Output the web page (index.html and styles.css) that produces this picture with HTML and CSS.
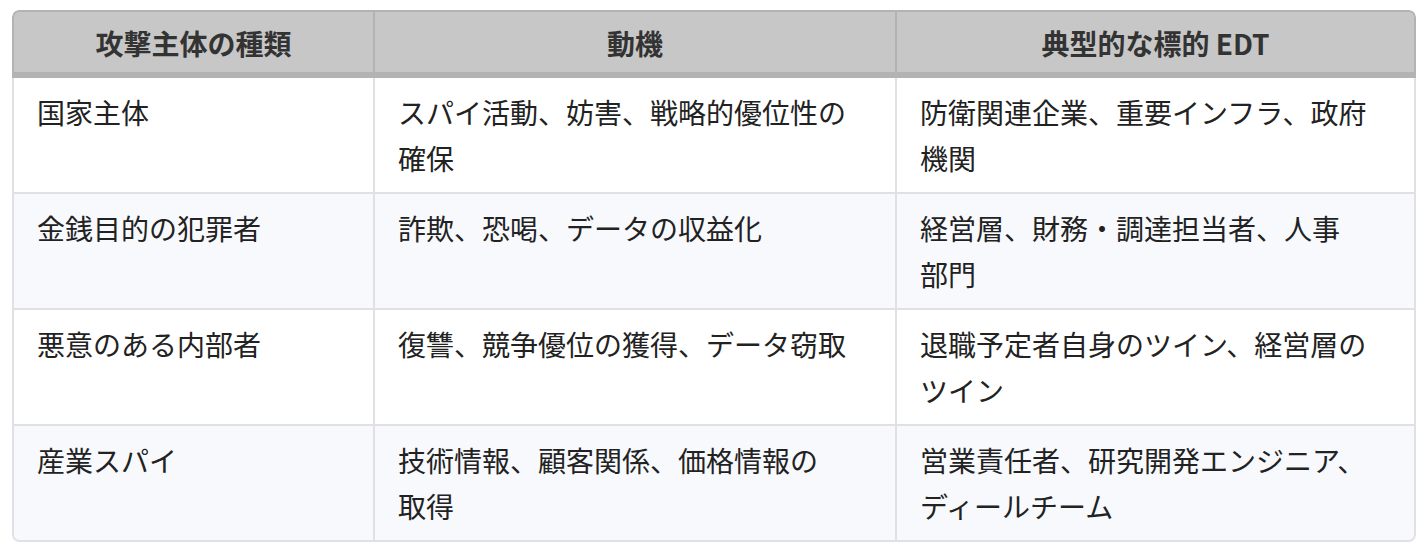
FILE: index.html
```html
<!DOCTYPE html>
<html lang="ja">
<head>
<meta charset="utf-8">
<title>攻撃主体の種類</title>
<link rel="stylesheet" href="styles.css">
</head>
<body>
<div class="table-wrap">
  <table class="threat-table">
    <colgroup>
      <col class="c1">
      <col class="c2">
      <col class="c3">
    </colgroup>
    <thead>
      <tr>
        <th>攻撃主体の種類</th>
        <th>動機</th>
        <th>典型的な標的 EDT</th>
      </tr>
    </thead>
    <tbody>
      <tr>
        <td>国家主体</td>
        <td>スパイ活動、妨害、戦略的優位性の<span class="nw">確保</span></td>
        <td>防衛関連企業、重要インフラ、政府<span class="nw">機関</span></td>
      </tr>
      <tr>
        <td>金銭目的の犯罪者</td>
        <td>詐欺、恐喝、データの収益化</td>
        <td>経営層、財務・調達担当者、人事<span class="nw">部門</span></td>
      </tr>
      <tr>
        <td>悪意のある内部者</td>
        <td>復讐、競争優位の獲得、データ窃取</td>
        <td>退職予定者自身のツイン、経営層の<span class="nw">ツイン</span></td>
      </tr>
      <tr>
        <td>産業スパイ</td>
        <td>技術情報、顧客関係、価格情報の<span class="nw">取得</span></td>
        <td>営業責任者、研究開発エンジニア、<span class="nw">ディールチーム</span></td>
      </tr>
    </tbody>
  </table>
</div>
</body>
</html>
```

FILE: styles.css
```css
html, body {
  margin: 0;
  padding: 0;
  background: #ffffff;
}

body {
  padding: 10px 12px;
  font-family: "Noto Sans CJK JP", "Noto Sans", sans-serif;
  color: #222222;
}

.table-wrap {
  width: 1404px;
  border-radius: 7px;
  overflow: hidden;
}

.threat-table {
  width: 100%;
  table-layout: fixed;
  border-collapse: separate;
  border-spacing: 0;
  font-size: 28px;
  line-height: 46px;
}

.c1 { width: 363px; }
.c2 { width: 522px; }
.c3 { width: 519px; }

.threat-table th {
  background: #c7c7c7;
  color: #333333;
  font-weight: 700;
  text-align: center;
  padding: 8px 23px 6px;
  border-top: 2px solid #b3b3b3;
  border-right: 2px solid #b3b3b3;
  border-bottom: 6px solid #b3b3b3;
}

.threat-table th:first-child {
  border-left: 2px solid #b3b3b3;
  border-top-left-radius: 7px;
}

.threat-table th:last-child {
  border-top-right-radius: 7px;
}

.threat-table td {
  text-align: left;
  vertical-align: top;
  padding: 11px 23px;
  border-right: 2px solid #e1e1e5;
  border-bottom: 2px solid #e1e1e5;
  background: #ffffff;
}

.threat-table td:first-child {
  border-left: 2px solid #e1e1e5;
}

.threat-table tbody tr:nth-child(even) td {
  background: #f8f9fd;
}

.threat-table tbody tr:last-child td:first-child {
  border-bottom-left-radius: 7px;
}

.threat-table tbody tr:last-child td:last-child {
  border-bottom-right-radius: 7px;
}

.nw {
  white-space: nowrap;
}
```
